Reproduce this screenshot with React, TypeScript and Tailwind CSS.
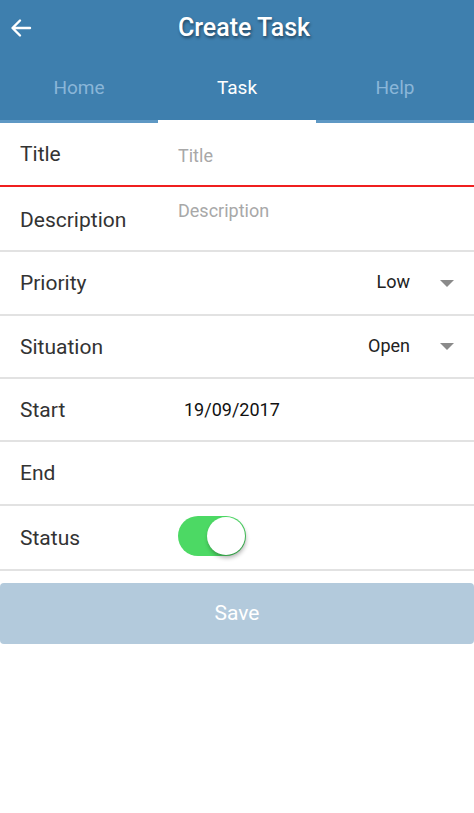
import { useState } from "react";

const Caret = () => (
  <svg width="14" height="7" viewBox="0 0 14 7" className="ml-[30px]">
    <path d="M0 0 L14 0 L7 7 Z" fill="#8a8a8a" />
  </svg>
);

const Row = ({
  label,
  children,
  border = "border-[#e2e2e2]",
  h = "h-[64px]",
}: {
  label: string;
  children?: React.ReactNode;
  border?: string;
  h?: string;
}) => (
  <div className={`flex items-center ${h} border-b-2 ${border}`}>
    <span className="w-[178px] shrink-0 pl-5 pt-[2px] text-[21px] text-[#333]">{label}</span>
    <div className="flex-1 flex items-center pr-5">{children}</div>
  </div>
);

export default function App() {
  const [status, setStatus] = useState(true);
  const tabs = ["Home", "Task", "Help"];

  return (
    <div className="w-[474px] h-[813px] bg-white font-['Roboto',sans-serif]">
      <header className="bg-[#3e7fae]">
        <div className="relative h-[56px] flex items-center justify-center">
          <svg
            width="24"
            height="24"
            viewBox="0 0 24 24"
            className="absolute left-[9px] top-[16px]"
          >
            <path
              d="M21 12 H4 M11 4.5 L3.5 12 L11 19.5"
              stroke="white"
              strokeWidth="2.4"
              fill="none"
              strokeLinecap="round"
              strokeLinejoin="round"
            />
          </svg>
          <h1 className="pl-[14px] text-white text-[25px] font-medium [text-shadow:1px_2px_3px_rgba(0,0,0,0.45)]">
            Create Task
          </h1>
        </div>
        <nav className="flex h-[67px] border-b-[3px] border-[#5e98c4]">
          {tabs.map((t) => (
            <div
              key={t}
              className={`flex-1 flex items-center justify-center pt-[1px] text-[19px] ${
                t === "Task"
                  ? "text-white border-b-[3px] border-white -mb-[3px]"
                  : "text-[#8ab6d8]"
              }`}
            >
              {t}
            </div>
          ))}
        </nav>
      </header>

      <Row label="Title" border="border-[#f01f1f]">
        <span className="pt-[3px] text-[18px] text-[#a8a8a8]">Title</span>
      </Row>
      <div className="flex h-[65px] border-b-2 border-[#e2e2e2]">
        <span className="w-[178px] shrink-0 pl-5 pt-[18px] text-[21px] text-[#333]">Description</span>
        <span className="pt-[10px] text-[18px] text-[#a8a8a8]">Description</span>
      </div>
      <Row label="Priority">
        <div className="ml-auto flex items-center pt-[1px]">
          <span className="text-[18px] text-[#222] -mt-[4px]">Low</span>
          <Caret />
        </div>
      </Row>
      <Row label="Situation" h="h-[63px]">
        <div className="ml-auto flex items-center">
          <span className="text-[18px] text-[#222] -mt-[3px]">Open</span>
          <Caret />
        </div>
      </Row>
      <Row label="Start" h="h-[63px]">
        <span className="pl-[6px] text-[18px] text-[#111]">19/09/2017</span>
      </Row>
      <Row label="End" h="h-[64px]" />
      <Row label="Status" h="h-[65px]">
        <button
          onClick={() => setStatus(!status)}
          className={`relative -mt-[4px] w-[68px] h-[40px] rounded-full ${
            status ? "bg-[#4cd964]" : "bg-[#e5e5e5]"
          }`}
        >
          <span
            className={`absolute top-[1px] w-[38px] h-[38px] rounded-full bg-white shadow-[1px_3px_4px_rgba(0,0,0,0.3)] ${
              status ? "left-[29px]" : "left-[1px]"
            }`}
          />
        </button>
      </Row>

      <div className="pt-[12px]">
        <button className="w-full h-[61px] rounded-[4px] bg-[#b3cadc] text-white text-[21px]">
          Save
        </button>
      </div>
    </div>
  );
}
